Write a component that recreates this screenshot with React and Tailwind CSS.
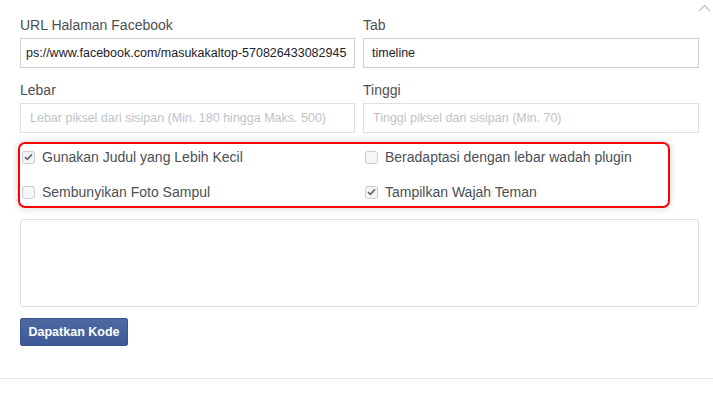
import React from 'react';

const Check = ({ checked }) => (
  <span className="ml-[2px] flex h-[13px] w-[13px] shrink-0 items-center justify-center rounded-[3px] border border-[#c9ccd1] bg-[#f5f6f7]">
    {checked && (
      <svg width="9" height="8" viewBox="0 0 9 8" fill="none">
        <path d="M1 4.2 L3.4 6.4 L8 1.4" stroke="#606770" strokeWidth="1.6" />
      </svg>
    )}
  </span>
);

const Option = ({ label, checked }) => (
  <label className="flex h-[18px] items-center gap-[7px] text-[14px] leading-[18px] text-[#4b4f56]">
    <Check checked={checked} />
    <span>{label}</span>
  </label>
);

const Field = ({ label, children, className = '' }) => (
  <div className={className}>
    <div className="mb-[4px] text-[14px] leading-[18px] text-[#4b4f56]">{label}</div>
    {children}
  </div>
);

const App = () => {
  return (
    <div className="relative h-[393px] w-[713px] overflow-hidden bg-white font-['Liberation_Sans',Arial,sans-serif]">
      {/* collapse chevron */}
      <svg className="absolute right-[2px] top-[4px]" width="13" height="8" viewBox="0 0 13 8" fill="none">
        <path d="M1 7 L6.5 1.5 L12 7" stroke="#c4c7cc" strokeWidth="1.5" />
      </svg>

      <div className="pl-5 pt-4">
        <div className="grid w-[679px] grid-cols-[335px_336px] gap-x-2">
          <Field label="URL Halaman Facebook">
            {/* input scrolled to the end, so only the tail of the URL shows */}
            <div className="flex h-[30px] items-center whitespace-nowrap border border-[#ccd0d5] pl-[5px] text-[12.5px] text-[#1d2129]">
              ps://www.facebook.com/masukakaltop-570826433082945
            </div>
          </Field>
          <Field label="Tab">
            <div className="flex h-[30px] items-center border border-[#ccd0d5] px-[8px] text-[12.5px] text-[#1d2129]">
              timeline
            </div>
          </Field>
          <Field label="Lebar" className="mt-[13px]">
            <div className="flex h-[30px] items-center whitespace-nowrap border border-[#dddfe2] px-[9px] text-[12.5px] text-[#bec3c9]">
              Lebar piksel dari sisipan (Min. 180 hingga Maks. 500)
            </div>
          </Field>
          <Field label="Tinggi" className="mt-[13px]">
            <div className="flex h-[30px] items-center border border-[#dddfe2] px-[9px] text-[12.5px] text-[#bec3c9]">
              Tinggi piksel dari sisipan (Min. 70)
            </div>
          </Field>
        </div>

        {/* highlighted options */}
        <div className="ml-[-2px] mt-[9px] w-[652px] rounded-[7px] border-2 border-[#ff0000] pb-[5px] pt-[4px] shadow-[0_0_8px_rgba(0,0,0,0.18)]">
          <div className="grid grid-cols-[343px_1fr] gap-y-[17px]">
            <Option label="Gunakan Judul yang Lebih Kecil" checked />
            <Option label="Beradaptasi dengan lebar wadah plugin" />
            <Option label="Sembunyikan Foto Sampul" />
            <Option label="Tampilkan Wajah Teman" checked />
          </div>
        </div>

        <div className="mt-[11px] h-[88px] w-[679px] rounded-[3px] border border-[#dddfe2]" />

        <button
          type="button"
          className="mt-[11px] flex h-[28px] w-[108px] items-center justify-center rounded-[2px] border border-[#3b5591] bg-gradient-to-b from-[#4e69a2] to-[#3d5a98] text-[12.5px] font-bold text-white"
        >
          Dapatkan Kode
        </button>
      </div>

      <div className="mt-[32px] border-t border-[#e5e5e5]" />
    </div>
  );
};

export default App;
